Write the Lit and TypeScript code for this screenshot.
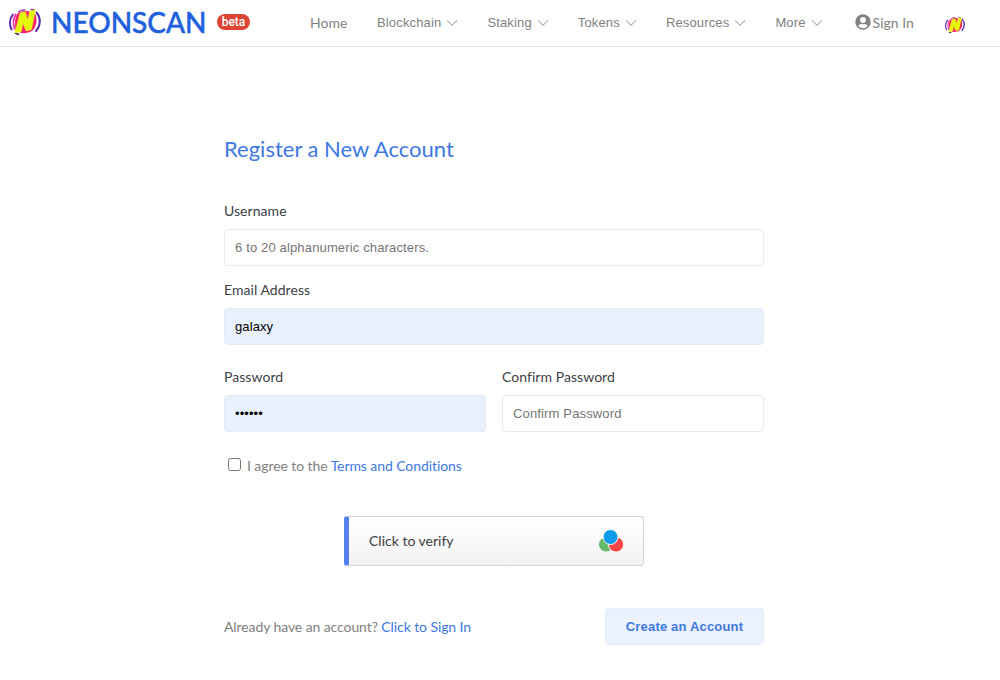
import { LitElement, html, css, svg } from "lit";
import { customElement } from "lit/decorators.js";

const MENUS = ["Blockchain", "Staking", "Tokens", "Resources", "More"];

const logo = () => html`<svg class="logo" viewBox="0 0 32 28">
  ${svg`
    <g fill="none" stroke-linecap="round">
      <path d="M3.800 6.500C.6 11 .4 17 2.600 21.500" stroke="#5a2bb0" stroke-width="1.900"/>
      <path d="M6.600 6.500C4.200 11 4 16.500 5.600 21" stroke="#f0289a" stroke-width="1.600"/>
      <path d="M27.500 4.500C31.800 9.500 32 17.500 27 23" stroke="#5a2bb0" stroke-width="2.100"/>
      <path d="M9.500 3.700C11.500 2.200 13.500 1.900 16 1.900" stroke="#8b2cae" stroke-width="1.100"/>
      <path d="M6.500 25.300L9.500 26.300" stroke="#35204f" stroke-width="1.700"/>
      <path d="M22 1.500L25 2" stroke="#8b2cae" stroke-width="1.300"/>
    </g>
    <path d="M8 6C11 2.800 17 2.500 20.500 3.500L26.500 6C28.500 12 27.500 18.500 23.500 22.500C19.500 25.500 14 25.800 11 24.500L6.500 21C5.500 15 6 10 8 6Z" fill="#ff1c70"/>
    <path d="M11 5L16.500 4L18.500 12L20.800 3.500L26.500 2L22.500 21.500L17 23L14 15L12.300 23.500L6 24.800Z" fill="#e3f80b" stroke="#e3f80b" stroke-width=".6"/>
  `}
</svg>`;

const chevron = html`<svg class="chev" viewBox="0 0 12 8"><path d="M1 1.500L6 6.300L11 1.500" fill="none" stroke="#8c8c8c" stroke-width="1"/></svg>`;

@customElement("app-root")
export class AppRoot extends LitElement {
  static styles = css`
    :host { display: block; height: 680px; background: #fff; overflow: hidden; font-family: Lato, sans-serif; font-size: 14px; color: #3b3f44; }
    * { box-sizing: border-box; }
    a { color: #3d78e3; text-decoration: none; }
    .bar { display: flex; height: 47px; border-bottom: 1px solid #e5e8eb; }
    .brand { display: flex; align-items: center; height: 44px; padding-left: 9px; width: 310px; }
    .logo { display: block; width: 32px; height: 28px; }
    .name { margin-left: 10px; font-size: 28px; line-height: 36px; font-weight: 500; -webkit-text-stroke: .5px #2160dc; color: #2160dc; width: 155px; white-space: nowrap; }
    .beta { margin-left: 11px; width: 33px; height: 16px; border-radius: 8px; background: #db4437; color: #fff; font: 500 12px/16px Roboto, sans-serif; text-align: center; }
    .nav { display: flex; align-items: center; height: 46px; color: #818181; }
    .home { width: 67px; padding-bottom: 2px; }
    .menu { display: flex; align-items: center; gap: 5px; height: 44px; margin-right: 29px; font: 13px/20px "Liberation Sans", sans-serif; letter-spacing: .15px; }
    .menu:last-of-type { margin-right: 30px; }
    .chev { display: block; width: 12px; height: 8px; }
    .sign { display: flex; align-items: center; gap: 2px; margin-left: 3px; width: 89px; padding-bottom: 2px; }
    .user { display: block; width: 16px; height: 16px; }
    .small { padding-left: 1px; }
    .small .logo { width: 20px; height: 18px; margin-top: 4px; }
    .form { width: 540px; margin: 86px 0 0 224px; }
    .title { margin: 0; font-size: 22px; line-height: 32px; font-weight: 400; color: #3d78e3; }
    .label { display: block; line-height: 20px; margin-bottom: 8px; letter-spacing: .05px; }
    .first { margin-top: 36px; }
    .field { display: block; width: 100%; height: 37px; padding: 0 10px; border: 1px solid #e7eaf3; border-radius: 4px; background: #fff; font: 13px/20px "Liberation Sans", sans-serif; letter-spacing: .15px; color: #000; outline: 0; }
    .field::placeholder { color: #757575; opacity: 1; }
    .filled { background: #e8f0fe; letter-spacing: .1px; }
    .second { margin-top: 14px; }
    .pair { display: grid; grid-template-columns: 1fr 1fr; gap: 16px; margin-top: 22px; }
    .agree { display: flex; align-items: center; height: 20px; margin-top: 24px; color: #818181; letter-spacing: -.08px; }
    .agree span { padding-bottom: 2px; }
    .check { width: 13px; height: 13px; margin: 0 6px 3px 4px; }
    .verify { display: flex; align-items: center; width: 300px; height: 50px; margin: 40px auto 0; padding: 0 19px 0 20px; border: 1px solid #d4d4d4; border-left: 5px solid #5581ee; border-radius: 3px; background: linear-gradient(#fff, #f2f2f2); justify-content: space-between; }
    .verify span { padding-bottom: 2px; }
    .balls { display: block; width: 26px; height: 24px; }
    .foot { display: flex; justify-content: space-between; align-items: center; margin-top: 42px; color: #818181; letter-spacing: -.09px; }
    .create { width: 159px; height: 37px; border: 1px solid #e4ebfb; border-radius: 4px; background: #ebf1fd; color: #3d78e3; font: 700 13px/20px "Liberation Sans", sans-serif; letter-spacing: .18px; padding: 0; }
  `;

  render() {
    return html`
      <header class="bar">
        <div class="brand">${logo()}<span class="name">NEONSCAN</span><span class="beta">beta</span></div>
        <nav class="nav">
          <span class="home">Home</span>
          ${MENUS.map((m) => html`<span class="menu">${m}${chevron}</span>`)}
          <span class="sign">
            <svg class="user" viewBox="0 0 16 16"><circle cx="8" cy="8" r="7.700" fill="#818181"/><circle cx="8" cy="6" r="2.900" fill="#fff"/><path d="M3.300 12.400C4 10.500 5.200 10 6.200 10Q8 10.700 9.800 10C10.800 10 12 10.500 12.700 12.400Q8 16 3.300 12.400Z" fill="#fff"/></svg>
            Sign In
          </span>
          <span class="small">${logo()}</span>
        </nav>
      </header>
      <main class="form">
        <h1 class="title">Register a New Account</h1>
        <div class="first"><label class="label">Username</label><input class="field" placeholder="6 to 20 alphanumeric characters." /></div>
        <div class="second"><label class="label">Email Address</label><input class="field filled" .value=${"galaxy"} /></div>
        <div class="pair">
          <div><label class="label">Password</label><input class="field filled" type="password" .value=${"secret"} /></div>
          <div><label class="label">Confirm Password</label><input class="field" placeholder="Confirm Password" /></div>
        </div>
        <div class="agree"><input class="check" type="checkbox" /><span>I agree to the <a>Terms and Conditions</a></span></div>
        <div class="verify">
          <span>Click to verify</span>
          <svg class="balls" viewBox="0 0 26 24"><circle cx="8" cy="15.500" r="7" fill="#66b966"/><circle cx="18" cy="15.500" r="7.600" fill="#ff4545" stroke="#f8f8f8"/><circle cx="12.500" cy="8" r="7.500" fill="#0d9bea" stroke="#fff"/></svg>
        </div>
        <div class="foot"><span>Already have an account? <a>Click to Sign In</a></span><button class="create">Create an Account</button></div>
      </main>
    `;
  }
}
